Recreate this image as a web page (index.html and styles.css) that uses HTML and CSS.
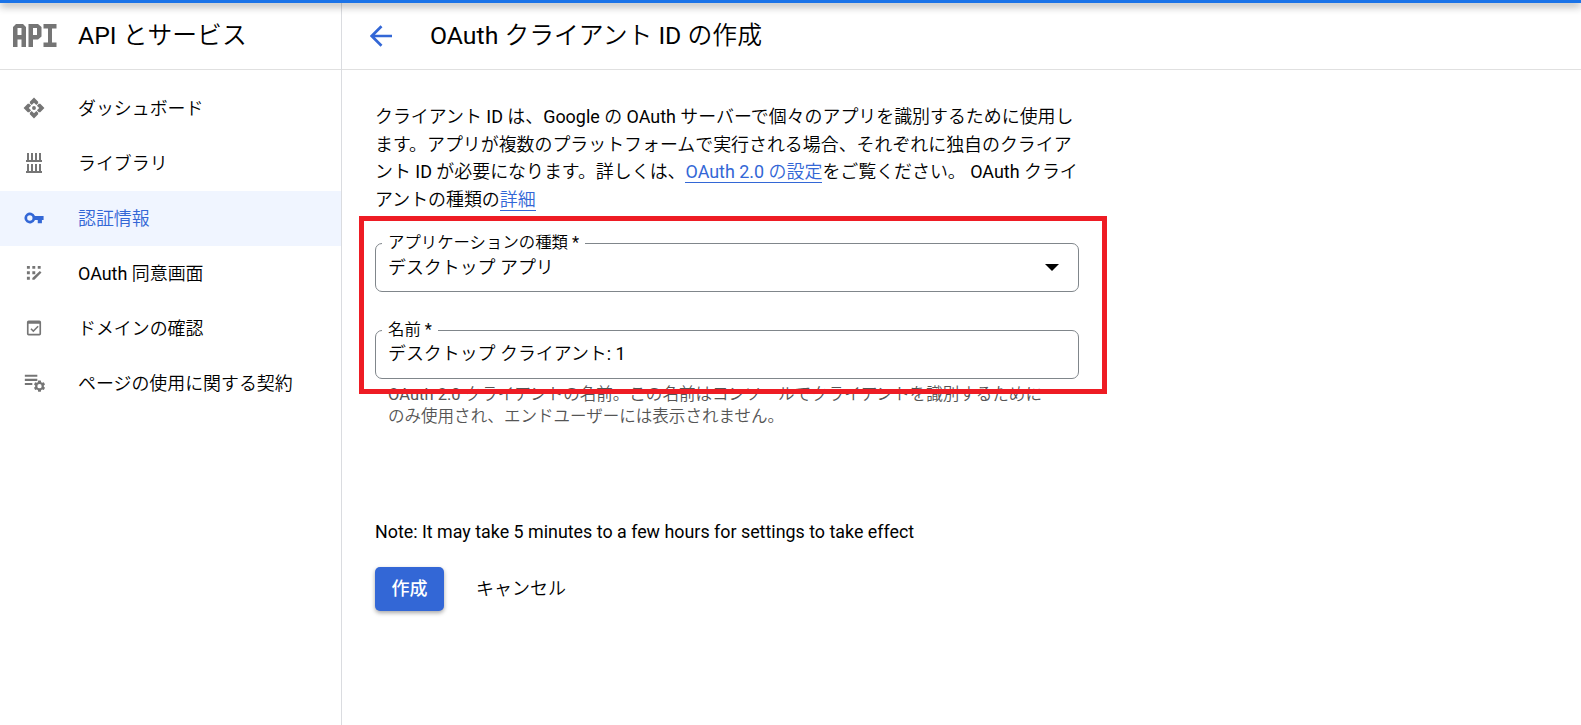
FILE: index.html
```html
<!DOCTYPE html>
<html lang="ja">
<head>
<meta charset="utf-8">
<title>OAuth クライアント ID の作成</title>
<link rel="stylesheet" href="styles.css">
</head>
<body>
<div class="topbar"></div>
<div class="layout">
  <aside class="sidebar">
    <div class="product">
      <svg class="api" width="44" height="23" viewBox="0 0 44 23" fill="#757575" fill-rule="evenodd"><path d="M0 23V3l3-3h7l3 3v20H8.500v-7.500h-4V23zM4.500 11h4V4h-4zM15.500 23V0H25l3.500 3v9.500l-3.500 3h-5V23zM20 11h4V4h-4zM30.500 0h13v4.500H39V18.500h4.500V23h-13v-4.500H35V4.500h-4.500z"/></svg>
      <span class="product-name">API とサービス</span>
    </div>
    <nav class="nav">
      <a class="item"><svg class="icon" viewBox="0 0 24 24"><circle cx="12" cy="12" r="2.300"/><path d="M12-.5l5 5v1.800l-2.200 2.200L12 5.700 9.200 8.500 7 6.300V4.500zM12 24.500l5-5v-1.800l-2.200-2.200L12 18.300l-2.800-2.800L7 17.700v1.800zM-.5 12l5-5h1.800l2.200 2.200L5.700 12l2.800 2.800L6.300 17H4.500zM24.500 12l-5-5h-1.800l-2.200 2.200 2.800 2.800-2.800 2.800 2.200 2.200h1.800z"/></svg><span>ダッシュボード</span></a>
      <a class="item"><svg class="icon" viewBox="0 0 20 20"><path d="M2 7h16v2H2zM3 0h2v8H3zM7 0h2v8H7zM11 0h2v8h-2zM15 0h2v8h-2zM2 18h16v2H2zM3 11h2v8H3zM7 11h2v8H7zM11 11h2v8h-2zM15 11h2v8h-2z"/></svg><span>ライブラリ</span></a>
      <a class="item active"><svg class="icon" viewBox="0 0 24 24"><path d="M13.200 9.500A6.600 6.600 0 1 0 13.200 14.500H16.500v3.800h5v-3.800H23.500v-5zM7 15.200a3.200 3.200 0 1 1 0-6.400 3.200 3.200 0 0 1 0 6.400z"/></svg><span>認証情報</span></a>
      <a class="item"><svg class="icon" viewBox="0 0 24 24"><path d="M3.500 3.500h3.500v3.500H3.500zM10 3.500h3.500v3.500H10zM16.500 3.500H20v3.500h-3.500zM3.500 10h3.500v3.500H3.500zM10 10h3.500v3.500H10zM3.500 16.500h3.500V20H3.500zM19 9.500l2 2-8.500 8.500H10v-2z"/></svg><span>OAuth 同意画面</span></a>
      <a class="item"><svg class="icon" viewBox="0 0 24 24"><path fill-rule="evenodd" d="M5.500 3h13a2 2 0 0 1 2 2v14a2 2 0 0 1-2 2h-13a2 2 0 0 1-2-2V5a2 2 0 0 1 2-2zM5.500 7v12h13V7zM16.300 9.300l1.300 1.300-6.400 6.400-3.500-3.500L9 12.200l2.200 2.200z"/></svg><span>ドメインの確認</span></a>
      <a class="item"><svg class="icon" viewBox="0 0 24 24"><path d="M1 2h15v2.500H1zM1 7h15v2.500H1zM1 12h9v2.500H1z"/><path fill-rule="evenodd" d="M17 9h3.200l.4 2 1.400.8 1.800-.7 1.400 2.600-1.400 1.300v1.500l1.400 1.300-1.400 2.600-1.800-.7-1.400.8-.4 2H17l-.4-2-1.400-.8-1.800.7-1.400-2.600 1.400-1.300V15L12 13.700l1.400-2.600 1.800.7 1.400-.8zM18.600 13.200a2.600 2.600 0 1 0 0 5.200 2.600 2.600 0 0 0 0-5.200z"/></svg><span>ページの使用に関する契約</span></a>
    </nav>
  </aside>
  <main class="main">
    <header class="header">
      <svg class="back" viewBox="0 0 22 22" width="22" height="22" fill="none" stroke="#3367d6" stroke-width="2.700"><path d="M22 11H2M11.500 1.200 1.700 11l9.800 9.800"/></svg>
      <h1 class="title">OAuth クライアント ID の作成</h1>
    </header>
    <div class="content">
      <p class="intro">クライアント ID は、Google の OAuth サーバーで個々のアプリを識別するために使用し<br>ます。アプリが複数のプラットフォームで実行される場合、それぞれに独自のクライア<br>ント ID が必要になります。詳しくは、<a class="link">OAuth 2.0 の設定</a>をご覧ください。 OAuth クライ<br>アントの種類の<a class="link">詳細</a></p>
      <div class="fields">
        <div class="field"><label class="label">アプリケーションの種類 *</label><span class="value">デスクトップ アプリ</span><i class="caret"></i></div>
        <div class="field second"><label class="label">名前 *</label><span class="value">デスクトップ クライアント: 1</span></div>
        <p class="hint">OAuth 2.0 クライアントの名前。この名前はコンソールでクライアントを識別するために<br>のみ使用され、エンドユーザーには表示されません。</p>
        <div class="highlight"></div>
      </div>
      <p class="note">Note: It may take 5 minutes to a few hours for settings to take effect</p>
      <div class="actions"><button class="create">作成</button><button class="cancel">キャンセル</button></div>
    </div>
  </main>
</div>
</body>
</html>
```
FILE: styles.css
```css
* { box-sizing: border-box; }
body { margin: 0; height: 725px; overflow: hidden; display: flex; flex-direction: column; background: #fff; color: #000; font: 17.93px/27.5px Roboto, "Noto Sans CJK JP DemiLight", "Noto Sans CJK JP Light", "Noto Sans CJK JP", sans-serif; white-space: nowrap; }
p, h1 { margin: 0; font-weight: 400; }
.topbar { height: 3px; flex: none; background: #1a73e8; box-shadow: 0 2px 8px rgba(0,0,0,.65); position: relative; }
.layout { flex: 1; display: flex; }
.sidebar { width: 342px; border-right: 1px solid #dadce0; }
.product { height: 67px; border-bottom: 1px solid #e0e0e0; display: flex; align-items: center; padding-left: 13px; gap: 21px; }
.product-name, .title { font-size: 24.8px; line-height: 30px; }
.product-name { padding-bottom: 1px; }
.api { margin-top: -1px; }
.nav { padding-top: 11px; }
.item { height: 55px; display: flex; align-items: center; padding-left: 24px; gap: 34px; }
.icon { width: 20px; height: 20px; fill: #757575; overflow: visible; margin-top: -1px; }
.active { background: #f0f5ff; color: #3367d6; }
.active .icon { fill: #3367d6; }
.main { flex: 1; }
.header { height: 67px; border-bottom: 1px solid #e0e0e0; display: flex; align-items: center; padding-left: 28px; gap: 38px; }
.title { padding-bottom: 1px; }
.back { margin-top: -1px; }
.content { padding: 33px 0 0 33px; }
.link { color: #3367d6; border-bottom: 1px solid #3367d6; }
.fields { position: relative; width: 704px; padding-top: 30px; }
.field { position: relative; height: 49px; border: 1px solid #80868b; border-radius: 7px; padding: 10px 12px; display: flex; justify-content: space-between; }
.second { margin-top: 38px; padding-top: 9px; }
.label { position: absolute; left: 6px; top: -12px; padding: 0 6px; background: #fff; font-size: 16.4px; line-height: 22px; }
.value { line-height: 28px; }
.caret { margin: 10px 7px 0 0; width: 14px; height: 7px; background: #000; clip-path: polygon(0 0, 100% 0, 50% 100%); }
.hint { padding: 5px 0 0 13px; font-size: 16.55px; line-height: 22px; color: #555; }
.highlight { position: absolute; left: -16px; top: 3px; width: 748px; height: 178px; border: 5px solid #ee1c24; }
.note { margin-top: 90px; font-size: 17.88px; }
.actions { margin-top: 21px; display: flex; gap: 32px; }
button { font: 18px/27px Roboto, "Noto Sans CJK JP DemiLight", "Noto Sans CJK JP Light", "Noto Sans CJK JP", sans-serif; border: 0; padding: 0; background: none; color: #000; }
.create { width: 69px; height: 44px; border-radius: 5px; background: #3367d6; color: #fff; font-family: Roboto, "Noto Sans CJK JP", sans-serif; font-weight: 500; box-shadow: 0 2px 4px rgba(0,0,0,.35); }
```
